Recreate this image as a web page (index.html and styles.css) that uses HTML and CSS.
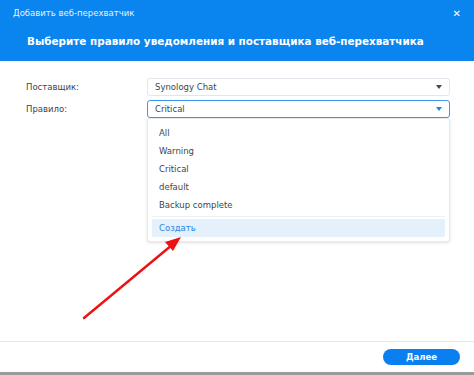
FILE: index.html
```html
<!DOCTYPE html>
<html lang="ru">
<head>
    <meta charset="UTF-8">
    <title>Добавить веб-перехватчик</title>
    <link rel="stylesheet" href="styles.css">
</head>
<body>
    <div class="dialog">
        <header class="dialog-header">
            <div class="title-bar">
                <span class="title">Добавить веб-перехватчик</span>
                <span class="close">&#x2715;</span>
            </div>
            <h1>Выберите правило уведомления и поставщика веб-перехватчика</h1>
        </header>

        <div class="dialog-body">
            <div class="form-row">
                <label>Поставщик:</label>
                <div class="select">
                    <span>Synology Chat</span>
                    <span class="caret"></span>
                </div>
            </div>
            <div class="form-row">
                <label>Правило:</label>
                <div class="select-wrap">
                    <div class="select focused">
                        <span>Critical</span>
                        <span class="caret"></span>
                    </div>
                    <ul class="menu">
                        <li>All</li>
                        <li>Warning</li>
                        <li>Critical</li>
                        <li>default</li>
                        <li>Backup complete</li>
                        <li class="sep"></li>
                        <li class="create">Создать</li>
                    </ul>
                </div>
            </div>
        </div>

        <footer class="dialog-footer">
            <button class="btn-primary">Далее</button>
        </footer>

        <!-- annotation arrow -->
        <svg class="arrow" width="474" height="375" viewBox="0 0 474 375">
            <line x1="84" y1="318" x2="172" y2="245" stroke="#ee1111" stroke-width="2.4" stroke-linecap="round"/>
            <polygon points="181,237 165,242 173,251" fill="#ee1111"/>
        </svg>
    </div>
</body>
</html>
```

FILE: styles.css
```css
* {
    margin: 0;
    padding: 0;
    box-sizing: border-box;
}

body {
    font-family: 'DejaVu Sans', Verdana, sans-serif;
    font-size: 8.5px;
    color: #333d47;
    background: #9a9a9a;
    width: 474px;
    height: 375px;
    overflow: hidden;
}

.dialog {
    position: relative;
    width: 474px;
    height: 372px;
    background: #ffffff;
    display: flex;
    flex-direction: column;
}

.dialog-header {
    background: #0a84ee;
    height: 61px;
    color: #ffffff;
}

.title-bar {
    display: flex;
    justify-content: space-between;
    align-items: center;
    padding: 6px 13px 0 13px;
    height: 20px;
}

.title {
    font-size: 8.5px;
    color: #e8f2fd;
}

.close {
    font-size: 10px;
    font-weight: bold;
}

.dialog-header h1 {
    font-size: 10.4px;
    font-weight: bold;
    padding: 15px 0 0 27px;
}

.dialog-body {
    flex: 1;
    padding: 17px 24px 0 26px;
    display: flex;
    flex-direction: column;
    gap: 4px;
}

.form-row {
    display: flex;
    align-items: flex-start;
}

.form-row label {
    width: 121px;
    line-height: 18px;
    color: #3b4650;
}

.select-wrap {
    position: relative;
    flex: 1;
}

.select {
    flex: 1;
    height: 18px;
    border: 1px solid #e1e6ec;
    border-radius: 3px;
    display: flex;
    align-items: center;
    justify-content: space-between;
    padding: 0 7px 0 7px;
    color: #3b4650;
}

.select.focused {
    border-color: #3c97ee;
}

.caret {
    width: 0;
    height: 0;
    border-left: 3.5px solid transparent;
    border-right: 3.5px solid transparent;
    border-top: 4px solid #414b55;
}

.focused .caret {
    border-top-color: #1b82e6;
}

.menu {
    position: absolute;
    top: 18px;
    left: 0;
    right: 0;
    list-style: none;
    background: #ffffff;
    border: 1px solid #e6eaee;
    border-radius: 3px;
    box-shadow: 0 1px 3px rgba(0, 0, 0, 0.12);
    padding: 5px 4px 4px 4px;
}

.menu li {
    height: 18px;
    line-height: 18px;
    padding-left: 7px;
    color: #3b4650;
}

.menu .sep {
    height: 1px;
    background: #eef1f4;
    margin: 2px 0 2px;
}

.menu .create {
    background: #e4f0fc;
    color: #2a86e0;
    border-radius: 2px;
}

.dialog-footer {
    height: 31px;
    border-top: 1px solid #e2e8ee;
    display: flex;
    justify-content: flex-end;
    align-items: center;
    padding-right: 14px;
}

.btn-primary {
    width: 77px;
    height: 16px;
    border: none;
    border-radius: 8px;
    background: #0a7ff0;
    color: #ffffff;
    font-family: 'DejaVu Sans', Verdana, sans-serif;
    font-size: 8.5px;
    font-weight: bold;
}

.arrow {
    position: absolute;
    top: 0;
    left: 0;
    pointer-events: none;
}
```
